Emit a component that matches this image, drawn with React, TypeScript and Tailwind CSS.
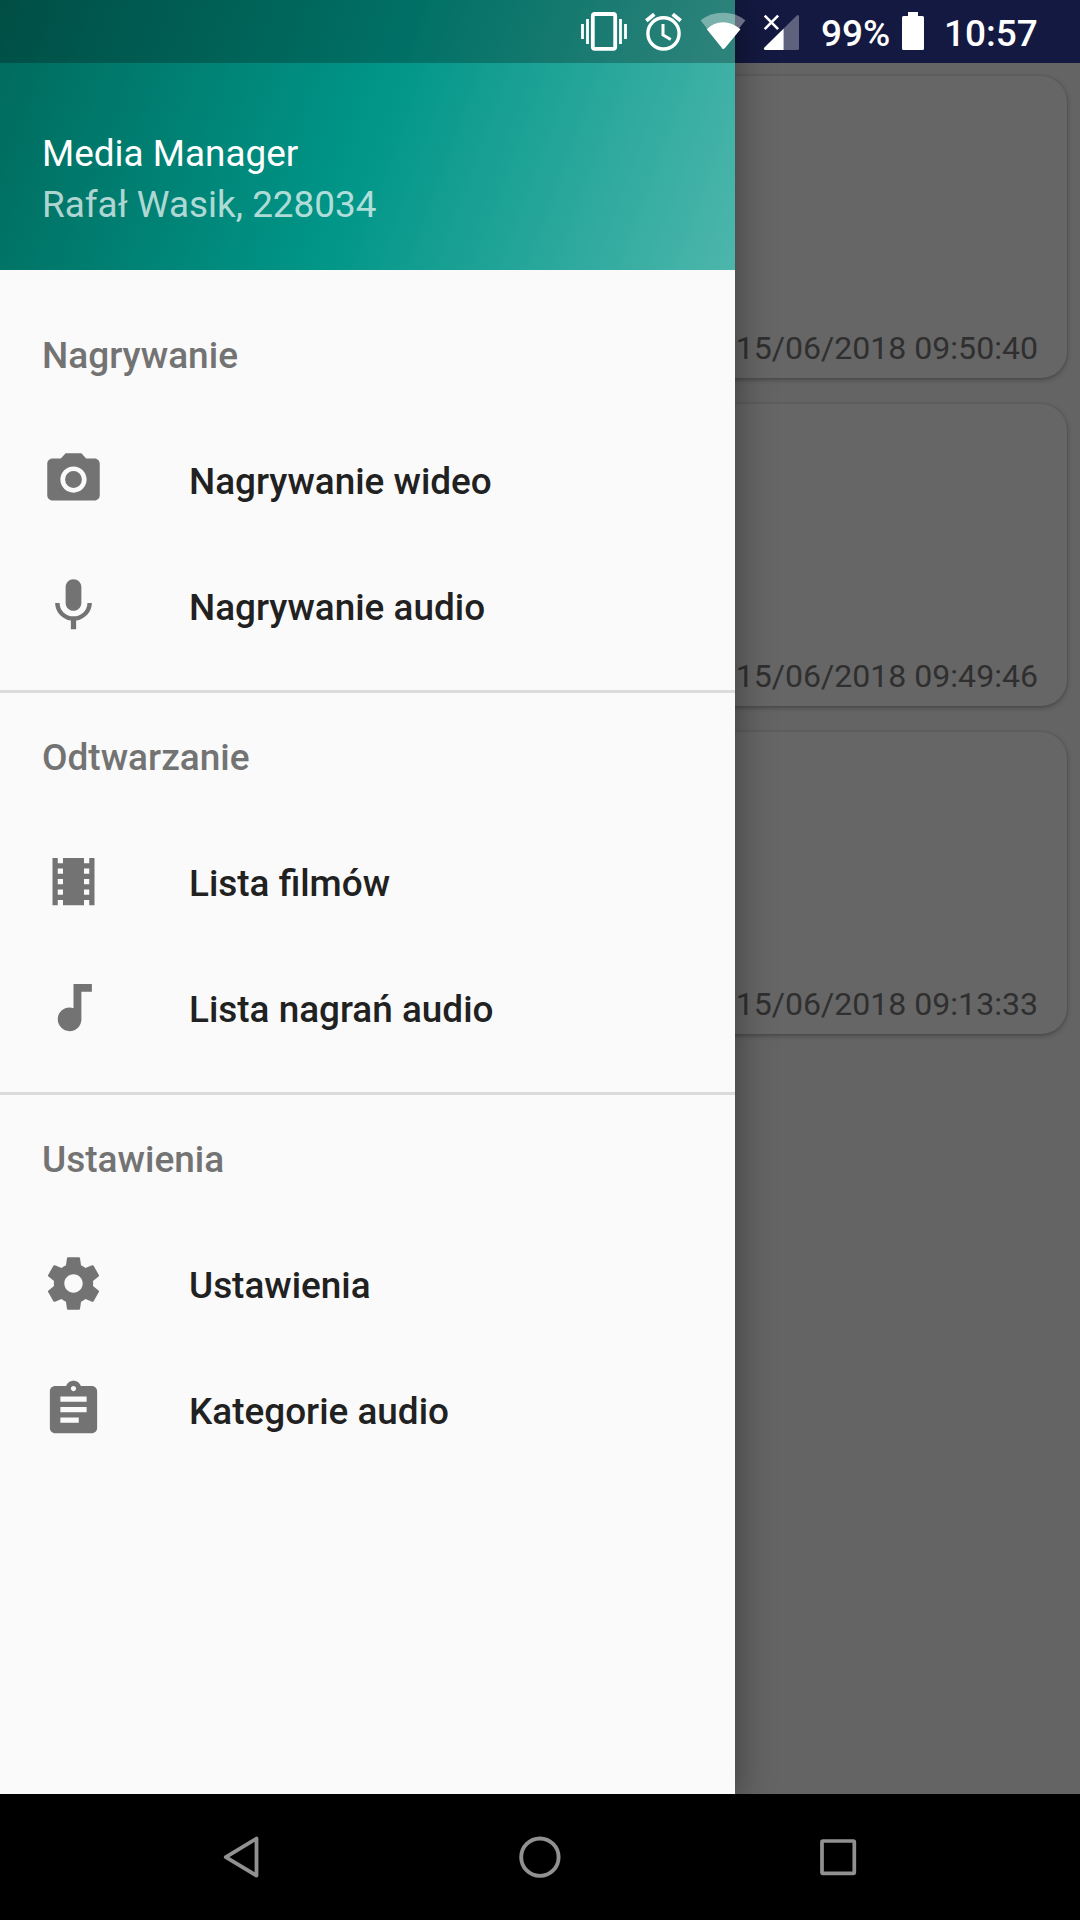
import React from "react";

const ICONS = {
  camera:
    "M9 2L7.17 4H4c-1.1 0-2 .9-2 2v12c0 1.1.9 2 2 2h16c1.1 0 2-.9 2-2V6c0-1.1-.9-2-2-2h-3.17L15 2H9zm3 15c-2.76 0-5-2.24-5-5s2.24-5 5-5 5 2.24 5 5-2.24 5-5 5zM12 8.8a3.2 3.2 0 1 0 0 6.4a3.2 3.2 0 1 0 0-6.4z",
  mic: "M12 14c1.66 0 2.99-1.34 2.99-3L15 5c0-1.66-1.34-3-3-3S9 3.34 9 5v6c0 1.66 1.34 3 3 3zm5.3-3c0 3-2.54 5.1-5.3 5.1S6.7 14 6.7 11H5c0 3.41 2.72 6.23 6 6.72V21h2v-3.28c3.28-.48 6-3.3 6-6.72h-1.7z",
  film: "M18 3v2h-2V3H8v2H6V3H4v18h2v-2h2v2h8v-2h2v2h2V3h-2zM8 17H6v-2h2v2zm0-4H6v-2h2v2zm0-4H6V7h2v2zm10 8h-2v-2h2v2zm0-4h-2v-2h2v2zm0-4h-2V7h2v2z",
  note: "M12 3v9.28c-.47-.17-.97-.28-1.5-.28C8.01 12 6 14.01 6 16.5S8.01 21 10.5 21c2.31 0 4.2-1.75 4.45-4H15V6h4V3h-7z",
  gear: "M19.43 12.98c.04-.32.07-.64.07-.98s-.03-.66-.07-.98l2.11-1.65c.19-.15.24-.42.12-.64l-2-3.46c-.12-.22-.39-.3-.61-.22l-2.49 1c-.52-.4-1.08-.73-1.69-.98l-.38-2.65C14.46 2.18 14.25 2 14 2h-4c-.25 0-.46.18-.49.42l-.38 2.65c-.61.25-1.17.59-1.69.98l-2.49-1c-.23-.09-.49 0-.61.22l-2 3.46c-.13.22-.07.49.12.64l2.11 1.65c-.04.32-.07.65-.07.98s.03.66.07.98l-2.11 1.65c-.19.15-.24.42-.12.64l2 3.46c.12.22.39.3.61.22l2.49-1c.52.4 1.08.73 1.69.98l.38 2.65c.03.24.24.42.49.42h4c.25 0 .46-.18.49-.42l.38-2.65c.61-.25 1.17-.59 1.69-.98l2.49 1c.23.09.49 0 .61-.22l2-3.46c.12-.22.07-.49-.12-.64l-2.11-1.65zM12 15.5c-1.93 0-3.5-1.57-3.5-3.5s1.57-3.5 3.5-3.5 3.5 1.57 3.5 3.5-1.57 3.5-3.5 3.5z",
  clipboard:
    "M19 3h-4.18C14.4 1.84 13.3 1 12 1c-1.3 0-2.4.84-2.82 2H5c-1.1 0-2 .9-2 2v14c0 1.1.9 2 2 2h14c1.1 0 2-.9 2-2V5c0-1.1-.9-2-2-2zm-7 0c.55 0 1 .45 1 1s-.45 1-1 1-1-.45-1-1 .45-1 1-1zm2 14H7v-2h7v2zm3-4H7v-2h10v2zm0-4H7V7h10v2z",
};

type IconName = keyof typeof ICONS;

const SECTIONS: { title: string; items: { icon: IconName; label: string }[] }[] = [
  {
    title: "Nagrywanie",
    items: [
      { icon: "camera", label: "Nagrywanie wideo" },
      { icon: "mic", label: "Nagrywanie audio" },
    ],
  },
  {
    title: "Odtwarzanie",
    items: [
      { icon: "film", label: "Lista filmów" },
      { icon: "note", label: "Lista nagrań audio" },
    ],
  },
  {
    title: "Ustawienia",
    items: [
      { icon: "gear", label: "Ustawienia" },
      { icon: "clipboard", label: "Kategorie audio" },
    ],
  },
];

const RECORDINGS = ["15/06/2018 09:50:40", "15/06/2018 09:49:46", "15/06/2018 09:13:33"];

function StatusBar() {
  return (
    <div className="absolute inset-x-0 top-0 z-20 flex h-[63px] items-start text-[37px] font-medium leading-[63px] text-white">
      <svg className="ml-[580px] h-[63px] w-12 shrink-0" viewBox="580 0 48 63" fill="none" stroke="white">
        <rect x="592.8" y="14" width="22.4" height="34.8" rx="2" strokeWidth="3.8" />
        <path d="M582.5 24v15M587.5 19v25M620.5 19v25M625.5 24v15" strokeWidth="2.8" />
      </svg>
      <svg className="ml-4 h-[63px] w-10 shrink-0" viewBox="644 0 40 63" fill="none" stroke="white" strokeWidth="3.4">
        <circle cx="663.5" cy="33.4" r="15.6" />
        <path d="M646.3 20.8l8-6.6M672.7 14.2l8 6.6" strokeWidth="3.8" />
        <path d="M663 24v11l7.8 4.5" strokeWidth="3" />
      </svg>
      <svg className="ml-4 h-[63px] w-[46px] shrink-0" viewBox="700 0 46 63" fill="white">
        <path d="M723 49.3L700.6 20.2Q710.5 12.8 723 12.8T745.4 20.2Z" opacity=".38" />
        <path d="M723 49.3L706.8 29.3Q713.8 22.3 723 22.3T740.5 29.3L725 48Q723 50.3 721 48Z" />
      </svg>
      <svg className="ml-[17px] h-[63px] w-[37px] shrink-0" viewBox="763 0 37 63" fill="white">
        <path d="M783.7 28.5L796.8 15.4Q799 14 799 16.5V48.5Q799 50 797.5 50H783.7Z" opacity=".32" />
        <path d="M783.7 28.5V50H765Q763 49.5 764.4 47.6Z" />
        <path d="M764.7 15.7l13.4 13.4M778.1 15.7l-13.4 13.4" fill="none" stroke="white" strokeWidth="2.6" />
      </svg>
      <span className="ml-[21px] w-[81px] shrink-0 pt-[2px]">99%</span>
      <svg className="h-[63px] w-[22px] shrink-0" viewBox="902 0 22 63" fill="white">
        <path d="M908 12h10v4h4.5q1.5 0 1.5 1.5v31q0 1.5-1.5 1.5h-19q-1.5 0-1.5-1.5v-31q0-1.5 1.5-1.5h4.5z" />
      </svg>
      <span className="ml-[20px] pt-[2px]">10:57</span>
    </div>
  );
}

function Drawer() {
  return (
    <aside className="absolute left-0 top-0 z-10 flex h-[1794px] w-[735px] flex-col bg-[#fafafa] shadow-[0_8px_36px_rgba(0,0,0,0.42)]">
      <header className="h-[270px] bg-[linear-gradient(110.17deg,#00695c_0%,#009688_50%,#4db6ac_100%)]">
        <div className="h-[63px] bg-black/25" />
        <div className="px-[42px] pt-[65px] text-[36.9px] leading-[51px]">
          <div className="text-white">Media Manager</div>
          <div className="text-white/70">Rafał Wasik, 228034</div>
        </div>
      </header>
      <nav className="flex flex-col pt-[22px]">
        {SECTIONS.map((section, i) => (
          <section key={section.title} className="flex flex-col">
            {i > 0 && <div className="mb-px mt-5 h-[3px] bg-[#dbdbdb]" />}
            <h2 className="flex h-[126px] items-center pl-[42px] pt-[2px] text-[37px] font-medium text-[#737373]">
              {section.title}
            </h2>
            {section.items.map((item) => (
              <div key={item.label} className="flex h-[126px] items-center pl-[42px]">
                <svg
                  className="mb-[3.5px] mr-[84px] size-[63px] fill-[#737373]"
                  viewBox="0 0 24 24"
                  fillRule="evenodd"
                >
                  <path d={ICONS[item.icon]} />
                </svg>
                <span className="pt-[2px] text-[36.9px] font-medium text-[#212121]">{item.label}</span>
              </div>
            ))}
          </section>
        ))}
      </nav>
    </aside>
  );
}

function NavBar() {
  return (
    <footer className="relative z-20 flex h-[126px] items-center justify-between bg-black px-[210px]">
      <svg className="h-[63px] w-[63px]" viewBox="210 1826 63 63" fill="none" stroke="#919191" strokeWidth="3.8">
        <path d="M256.5 1838.6V1875.6L225.8 1857.1Z" strokeLinejoin="round" />
      </svg>
      <svg className="h-[63px] w-[64px]" viewBox="508 1826 64 63" fill="none" stroke="#919191" strokeWidth="3.9">
        <circle cx="539.9" cy="1857.2" r="18.7" />
      </svg>
      <svg className="h-[63px] w-[63px]" viewBox="807 1826 63 63" fill="none" stroke="#919191" strokeWidth="3.7">
        <rect x="822" y="1841" width="32.3" height="32.3" rx="1" />
      </svg>
    </footer>
  );
}

export default function App() {
  return (
    <div className="relative flex h-[1920px] w-[1080px] flex-col overflow-hidden bg-[#646464] font-[Roboto,sans-serif]">
      <div className="h-[63px] shrink-0 bg-[#131940]" />
      <main className="flex flex-1 flex-col gap-[26px] px-[13px] pt-[13px]">
        {RECORDINGS.map((time) => (
          <article
            key={time}
            className="flex h-[302px] items-end justify-end rounded-[26px] bg-[#666666] pb-[10px] pr-[29px] text-[32.1px] leading-[40px] text-[#2f2f2f] shadow-[0_2px_5px_rgba(0,0,0,0.26),0_0_3px_rgba(0,0,0,0.12)]"
          >
            {time}
          </article>
        ))}
      </main>
      <Drawer />
      <StatusBar />
      <NavBar />
    </div>
  );
}
